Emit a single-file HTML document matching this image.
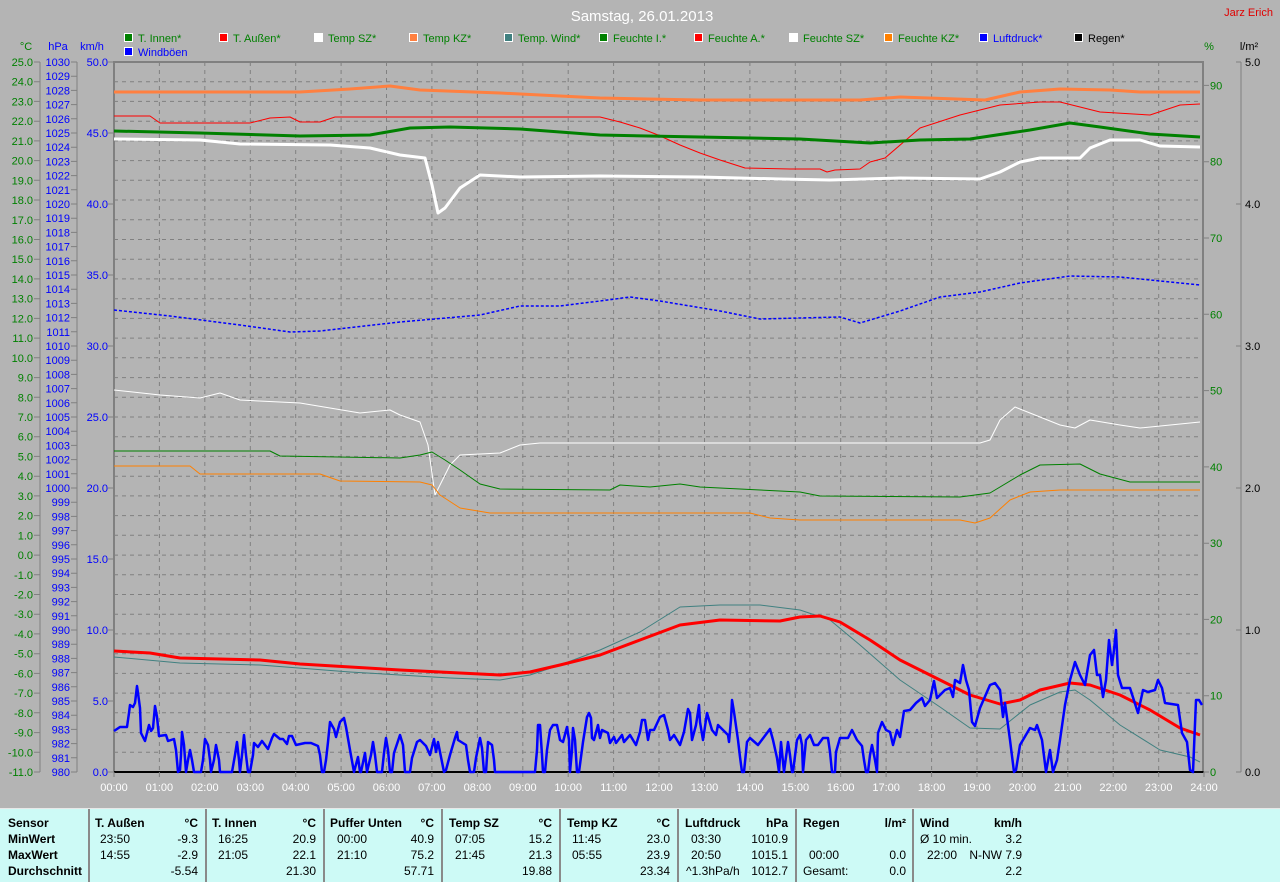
<!DOCTYPE html>
<html><head><meta charset="utf-8"><style>
html,body{margin:0;padding:0;width:1280px;height:881px;overflow:hidden;background:#b4b4b4;font-family:"Liberation Sans",sans-serif}
svg{position:absolute;left:0;top:0}
#tbl{position:absolute;left:0;top:808px;width:1280px;height:73px;background:#cdfaf6;border-top:1px solid #e8e8e8;font-size:12px;color:#000}
#tbl div{position:absolute;white-space:nowrap;line-height:14px}
.b{font-weight:bold}
.r{text-align:right}
.sep{width:2px;height:73px;top:0;background:#8a8a8a}
</style></head><body>
<svg width="1280" height="808" xmlns="http://www.w3.org/2000/svg" font-family="Liberation Sans, sans-serif" font-size="11">
<text x="642" y="21" fill="#fff" font-size="15" text-anchor="middle">Samstag, 26.01.2013</text>
<text x="1273" y="16" fill="#e00000" font-size="11" text-anchor="end">Jarz Erich</text>
<g font-size="11">
<rect x="124.5" y="33.5" width="8" height="8" fill="#008000" stroke="#fff"/><text x="138" y="42" fill="#008000">T. Innen*</text>
<rect x="219.5" y="33.5" width="8" height="8" fill="#f00" stroke="#fff"/><text x="233" y="42" fill="#008000">T. Außen*</text>
<rect x="314.5" y="33.5" width="8" height="8" fill="#fff" stroke="#fff"/><text x="328" y="42" fill="#008000">Temp SZ*</text>
<rect x="409.5" y="33.5" width="8" height="8" fill="#ff8040" stroke="#fff"/><text x="423" y="42" fill="#008000">Temp KZ*</text>
<rect x="504.5" y="33.5" width="8" height="8" fill="#408080" stroke="#fff"/><text x="518" y="42" fill="#008000">Temp. Wind*</text>
<rect x="599.5" y="33.5" width="8" height="8" fill="#008000" stroke="#fff"/><text x="613" y="42" fill="#008000">Feuchte I.*</text>
<rect x="694.5" y="33.5" width="8" height="8" fill="#f00" stroke="#fff"/><text x="708" y="42" fill="#008000">Feuchte A.*</text>
<rect x="789.5" y="33.5" width="8" height="8" fill="#fff" stroke="#fff"/><text x="803" y="42" fill="#008000">Feuchte SZ*</text>
<rect x="884.5" y="33.5" width="8" height="8" fill="#ff8000" stroke="#fff"/><text x="898" y="42" fill="#008000">Feuchte KZ*</text>
<rect x="979.5" y="33.5" width="8" height="8" fill="#00f" stroke="#fff"/><text x="993" y="42" fill="#0000ff">Luftdruck*</text>
<rect x="1074.5" y="33.5" width="8" height="8" fill="#000" stroke="#fff"/><text x="1088" y="42" fill="#000">Regen*</text>
<rect x="124.5" y="47.5" width="8" height="8" fill="#00f" stroke="#fff"/><text x="138" y="56" fill="#0000ff">Windböen</text>
</g>
<text x="26" y="50" fill="#008000" text-anchor="middle">°C</text>
<text x="58" y="50" fill="#0000ff" text-anchor="middle">hPa</text>
<text x="92" y="50" fill="#0000ff" text-anchor="middle">km/h</text>
<text x="1209" y="50" fill="#008000" text-anchor="middle">%</text>
<text x="1249" y="50" fill="#000" text-anchor="middle">l/m²</text>
<!-- grid -->
<g stroke="#808080" stroke-dasharray="4,4" stroke-width="1">
<path d="M114 81.7H1203M114 101.4H1203M114 121.2H1203M114 140.9H1203M114 160.6H1203M114 180.3H1203M114 200H1203M114 219.8H1203M114 239.5H1203M114 259.2H1203M114 278.9H1203M114 298.7H1203M114 318.4H1203M114 338.1H1203M114 357.8H1203M114 377.6H1203M114 397.3H1203M114 417H1203M114 436.7H1203M114 456.4H1203M114 476.2H1203M114 495.9H1203M114 515.6H1203M114 535.3H1203M114 555.1H1203M114 574.8H1203M114 594.5H1203M114 614.2H1203M114 633.9H1203M114 653.7H1203M114 673.4H1203M114 693.1H1203M114 712.8H1203M114 732.6H1203M114 752.3H1203"/>
<path d="M159.4 62V772M204.8 62V772M250.3 62V772M295.7 62V772M341.1 62V772M386.5 62V772M431.9 62V772M477.4 62V772M522.8 62V772M568.2 62V772M613.6 62V772M659 62V772M704.5 62V772M749.9 62V772M795.3 62V772M840.7 62V772M886.1 62V772M931.6 62V772M977 62V772M1022.4 62V772M1067.8 62V772M1113.2 62V772M1158.7 62V772"/>
</g>
<g stroke="#808080" stroke-width="2" fill="none"><path d="M114 772V62H1203V772"/></g>
<line x1="114" y1="772" x2="1204" y2="772" stroke="#000" stroke-width="2"/>
<!-- axes -->
<g stroke="#808080" stroke-width="1" fill="none">
<path d="M40 62V772M77 62V772M1241 62V772"/>
<path d="M34 62H40M34 81.7H40M34 101.4H40M34 121.2H40M34 140.9H40M34 160.6H40M34 180.3H40M34 200H40M34 219.8H40M34 239.5H40M34 259.2H40M34 278.9H40M34 298.7H40M34 318.4H40M34 338.1H40M34 357.8H40M34 377.6H40M34 397.3H40M34 417H40M34 436.7H40M34 456.4H40M34 476.2H40M34 495.9H40M34 515.6H40M34 535.3H40M34 555.1H40M34 574.8H40M34 594.5H40M34 614.2H40M34 633.9H40M34 653.7H40M34 673.4H40M34 693.1H40M34 712.8H40M34 732.6H40M34 752.3H40M34 772H40"/>
<path d="M71 62H77M71 76.2H77M71 90.4H77M71 104.6H77M71 118.8H77M71 133H77M71 147.2H77M71 161.4H77M71 175.6H77M71 189.8H77M71 204H77M71 218.2H77M71 232.4H77M71 246.6H77M71 260.8H77M71 275H77M71 289.2H77M71 303.4H77M71 317.6H77M71 331.8H77M71 346H77M71 360.2H77M71 374.4H77M71 388.6H77M71 402.8H77M71 417H77M71 431.2H77M71 445.4H77M71 459.6H77M71 473.8H77M71 488H77M71 502.2H77M71 516.4H77M71 530.6H77M71 544.8H77M71 559H77M71 573.2H77M71 587.4H77M71 601.6H77M71 615.8H77M71 630H77M71 644.2H77M71 658.4H77M71 672.6H77M71 686.8H77M71 701H77M71 715.2H77M71 729.4H77M71 743.6H77M71 757.8H77M71 772H77"/>
<path d="M108 62H114M108 133H114M108 204H114M108 275H114M108 346H114M108 417H114M108 488H114M108 559H114M108 630H114M108 701H114M108 772H114"/>
<path d="M1203 85.4H1209M1203 161.7H1209M1203 238H1209M1203 314.3H1209M1203 390.6H1209M1203 466.9H1209M1203 543.2H1209M1203 619.4H1209M1203 695.7H1209M1203 772H1209"/>
<path d="M1236 62H1241M1236 204H1241M1236 346H1241M1236 488H1241M1236 630H1241M1236 772H1241"/>
<path d="M114 772V777M159.4 772V777M204.8 772V777M250.3 772V777M295.7 772V777M341.1 772V777M386.5 772V777M431.9 772V777M477.4 772V777M522.8 772V777M568.2 772V777M613.6 772V777M659 772V777M704.5 772V777M749.9 772V777M795.3 772V777M840.7 772V777M886.1 772V777M931.6 772V777M977 772V777M1022.4 772V777M1067.8 772V777M1113.2 772V777M1158.7 772V777M1204 772V777"/>
</g>
<g fill="#008000" text-anchor="end" font-size="11">
<text x="33" y="66">25.0</text><text x="33" y="85.7">24.0</text><text x="33" y="105.4">23.0</text><text x="33" y="125.2">22.0</text><text x="33" y="144.9">21.0</text><text x="33" y="164.6">20.0</text><text x="33" y="184.3">19.0</text><text x="33" y="204">18.0</text><text x="33" y="223.8">17.0</text><text x="33" y="243.5">16.0</text><text x="33" y="263.2">15.0</text><text x="33" y="282.9">14.0</text><text x="33" y="302.7">13.0</text><text x="33" y="322.4">12.0</text><text x="33" y="342.1">11.0</text><text x="33" y="361.8">10.0</text><text x="33" y="381.6">9.0</text><text x="33" y="401.3">8.0</text><text x="33" y="421">7.0</text><text x="33" y="440.7">6.0</text><text x="33" y="460.4">5.0</text><text x="33" y="480.2">4.0</text><text x="33" y="499.9">3.0</text><text x="33" y="519.6">2.0</text><text x="33" y="539.3">1.0</text><text x="33" y="559.1">0.0</text><text x="33" y="578.8">-1.0</text><text x="33" y="598.5">-2.0</text><text x="33" y="618.2">-3.0</text><text x="33" y="637.9">-4.0</text><text x="33" y="657.7">-5.0</text><text x="33" y="677.4">-6.0</text><text x="33" y="697.1">-7.0</text><text x="33" y="716.8">-8.0</text><text x="33" y="736.6">-9.0</text><text x="33" y="756.3">-10.0</text><text x="33" y="776">-11.0</text>
</g>
<g fill="#0000ff" text-anchor="end" font-size="11">
<text x="70" y="66">1030</text><text x="70" y="80.2">1029</text><text x="70" y="94.4">1028</text><text x="70" y="108.6">1027</text><text x="70" y="122.8">1026</text><text x="70" y="137">1025</text><text x="70" y="151.2">1024</text><text x="70" y="165.4">1023</text><text x="70" y="179.6">1022</text><text x="70" y="193.8">1021</text><text x="70" y="208">1020</text><text x="70" y="222.2">1019</text><text x="70" y="236.4">1018</text><text x="70" y="250.6">1017</text><text x="70" y="264.8">1016</text><text x="70" y="279">1015</text><text x="70" y="293.2">1014</text><text x="70" y="307.4">1013</text><text x="70" y="321.6">1012</text><text x="70" y="335.8">1011</text><text x="70" y="350">1010</text><text x="70" y="364.2">1009</text><text x="70" y="378.4">1008</text><text x="70" y="392.6">1007</text><text x="70" y="406.8">1006</text><text x="70" y="421">1005</text><text x="70" y="435.2">1004</text><text x="70" y="449.4">1003</text><text x="70" y="463.6">1002</text><text x="70" y="477.8">1001</text><text x="70" y="492">1000</text><text x="70" y="506.2">999</text><text x="70" y="520.4">998</text><text x="70" y="534.6">997</text><text x="70" y="548.8">996</text><text x="70" y="563">995</text><text x="70" y="577.2">994</text><text x="70" y="591.4">993</text><text x="70" y="605.6">992</text><text x="70" y="619.8">991</text><text x="70" y="634">990</text><text x="70" y="648.2">989</text><text x="70" y="662.4">988</text><text x="70" y="676.6">987</text><text x="70" y="690.8">986</text><text x="70" y="705">985</text><text x="70" y="719.2">984</text><text x="70" y="733.4">983</text><text x="70" y="747.6">982</text><text x="70" y="761.8">981</text><text x="70" y="776">980</text>
<text x="108" y="66">50.0</text><text x="108" y="137">45.0</text><text x="108" y="208">40.0</text><text x="108" y="279">35.0</text><text x="108" y="350">30.0</text><text x="108" y="421">25.0</text><text x="108" y="492">20.0</text><text x="108" y="563">15.0</text><text x="108" y="634">10.0</text><text x="108" y="705">5.0</text><text x="108" y="776">0.0</text>
</g>
<g fill="#008000" font-size="11">
<text x="1210" y="89.4">90</text><text x="1210" y="165.7">80</text><text x="1210" y="242">70</text><text x="1210" y="318.3">60</text><text x="1210" y="394.6">50</text><text x="1210" y="470.9">40</text><text x="1210" y="547.2">30</text><text x="1210" y="623.4">20</text><text x="1210" y="699.7">10</text><text x="1210" y="776">0</text>
</g>
<g fill="#000" font-size="11">
<text x="1245" y="66">5.0</text><text x="1245" y="208">4.0</text><text x="1245" y="350">3.0</text><text x="1245" y="492">2.0</text><text x="1245" y="634">1.0</text><text x="1245" y="776">0.0</text>
</g>
<g fill="#fff" text-anchor="middle" font-size="11">
<text x="114" y="791">00:00</text><text x="159.4" y="791">01:00</text><text x="204.8" y="791">02:00</text><text x="250.3" y="791">03:00</text><text x="295.7" y="791">04:00</text><text x="341.1" y="791">05:00</text><text x="386.5" y="791">06:00</text><text x="431.9" y="791">07:00</text><text x="477.4" y="791">08:00</text><text x="522.8" y="791">09:00</text><text x="568.2" y="791">10:00</text><text x="613.6" y="791">11:00</text><text x="659" y="791">12:00</text><text x="704.5" y="791">13:00</text><text x="749.9" y="791">14:00</text><text x="795.3" y="791">15:00</text><text x="840.7" y="791">16:00</text><text x="886.1" y="791">17:00</text><text x="931.6" y="791">18:00</text><text x="977" y="791">19:00</text><text x="1022.4" y="791">20:00</text><text x="1067.8" y="791">21:00</text><text x="1113.2" y="791">22:00</text><text x="1158.7" y="791">23:00</text><text x="1204" y="791">24:00</text>
</g>
<!-- series -->
<g fill="none" stroke-linejoin="round">
<polyline stroke="#ff8040" stroke-width="3" points="114,92 300,92 350,89 390,86 420,90 500,93 600,98 700,100 800,100 860,100 900,97 985,100 1020,92 1060,89 1110,90 1140,92 1200,92"/>
<polyline stroke="#ff0000" stroke-width="1" points="114,116 150,116 160,123 250,123 270,118 290,117 300,122 320,122 335,117 600,117 620,122 640,128 658,135 680,145 700,153 720,160 745,168 790,169 820,169 827,172 835,170 860,169 870,162 885,158 920,128 960,115 1000,105 1040,102 1060,102 1100,112 1150,115 1180,105 1200,104"/>
<polyline stroke="#008000" stroke-width="3" points="114,131 200,133 300,136 370,135 410,128 450,127 520,129 600,135 700,137 800,139 870,143 920,140 970,139 1030,130 1070,123 1100,127 1150,134 1200,137"/>
<polyline stroke="#ffffff" stroke-width="3" points="114,139 200,140 240,144 330,145 370,148 400,155 425,158 432,185 438,213 445,208 460,188 480,175 520,177 600,176 700,177 780,179 830,180 900,178 980,179 1000,172 1020,162 1040,158 1080,158 1090,148 1110,140 1140,140 1160,146 1200,147"/>
<polyline stroke="#0000ff" stroke-width="1.5" stroke-dasharray="3,2" points="114,310 170,316 240,325 290,332 320,331 400,322 480,315 520,306 560,306 600,301 630,297 660,301 720,311 760,319 800,318 840,317 860,323 900,311 940,297 980,292 1020,283 1070,276 1120,277 1160,281 1200,285"/>
<polyline stroke="#ffffff" stroke-width="1" points="114,390 160,395 200,398 220,393 240,400 300,403 330,408 360,413 390,410 400,415 420,422 428,445 435,495 450,465 460,455 500,453 520,445 540,443 700,443 980,443 990,440 1000,420 1015,407 1030,413 1060,425 1075,428 1090,420 1120,425 1140,428 1200,422"/>
<polyline stroke="#008000" stroke-width="1" points="114,451 270,451 280,456 400,458 420,455 432,452 445,460 460,470 480,484 500,489 610,490 620,485 650,487 680,484 700,487 760,490 800,492 820,496 960,497 990,493 1020,475 1040,465 1080,464 1100,474 1130,482 1200,482"/>
<polyline stroke="#ff8000" stroke-width="1" points="114,466 190,466 200,474 320,474 340,481 420,482 432,485 440,495 460,508 490,513 750,513 770,518 800,520 960,520 975,523 990,518 1010,500 1030,492 1060,490 1200,490"/>
<polyline stroke="#408080" stroke-width="1" points="114,657 180,663 260,665 350,672 450,678 500,680 530,675 560,665 600,650 640,632 680,607 720,605 760,605 800,610 830,620 860,645 900,680 940,707 970,728 1000,729 1030,705 1060,692 1075,690 1090,700 1120,725 1160,750 1190,757 1200,762"/>
<polyline stroke="#ff0000" stroke-width="3" points="114,651 150,653 180,658 260,660 300,664 400,670 460,673 500,675 530,672 560,665 600,655 640,640 680,625 720,620 780,621 800,617 820,616 840,622 870,640 900,660 940,680 970,695 1000,704 1020,700 1040,690 1070,683 1090,685 1120,695 1150,710 1180,728 1200,735"/>
<polyline stroke="#0000ff" stroke-width="2.5" points="114,731 120,727 127,727 129,713 130,705 133,707 135,703 137,686 138,693 140,708 141,733 145,741 149,725 151,731 153,728 155,706 157,717 159,736 166,735 168,741 174,739 176,750 178,772 180,770 181,755 182,732 184,745 186,772 188,760 190,750 192,760 194,772 201,772 203,760 205,739 208,745 210,760 211,772 214,760 216,745 219,760 220,772 232,772 235,755 237,742 239,760 240,772 242,755 244,735 246,755 248,772 250,772 253,755 254,743 258,747 262,741 268,749 272,738 274,734 280,739 283,739 287,744 289,736 292,736 296,745 305,743 311,743 318,746 320,755 322,772 324,772 326,760 328,742 330,722 334,729 336,737 340,722 344,718 346,727 350,750 354,772 358,757 360,772 361,772 365,753 367,772 371,755 373,742 375,755 377,772 382,772 384,753 386,738 388,750 390,772 392,772 394,753 400,735 403,745 405,772 410,772 412,758 417,742 420,740 426,746 430,755 434,739 436,752 438,742 442,762 444,772 446,770 450,755 455,738 457,732 458,740 466,745 468,760 470,772 474,772 476,758 480,738 482,748 484,772 486,772 488,742 492,745 494,760 495,772 535,772 537,750 538,725 540,725 542,755 543,772 545,772 547,750 550,730 553,725 557,725 560,740 563,742 567,727 569,740 570,772 572,750 573,728 575,740 577,772 579,772 583,742 587,717 589,713 591,718 592,738 594,740 598,725 600,738 602,730 608,733 610,743 614,737 616,743 622,735 624,742 630,735 636,745 640,732 642,720 645,720 648,740 650,730 654,730 660,717 664,715 668,730 670,740 674,735 680,745 684,732 688,709 690,713 692,740 696,725 699,705 700,722 703,740 707,713 712,730 716,735 718,725 728,735 729,742 731,720 732,700 734,712 738,740 740,757 742,772 744,772 747,742 750,738 758,745 767,733 770,729 773,740 777,758 779,772 781,742 784,772 788,742 790,755 792,772 793,772 797,740 800,735 802,745 803,772 806,740 810,735 814,745 818,745 823,738 828,738 830,752 832,772 835,772 836,752 840,738 848,738 852,730 857,740 862,746 864,760 866,772 868,772 870,755 872,745 875,760 877,772 878,733 882,722 886,730 890,732 893,745 897,730 900,737 904,711 910,710 916,703 922,698 925,706 930,700 934,681 937,698 945,690 950,688 953,697 955,680 960,683 963,665 966,680 969,690 972,722 975,726 980,708 990,685 995,683 1000,690 1003,717 1005,703 1010,740 1014,772 1016,770 1020,745 1030,728 1035,730 1037,725 1042,740 1046,772 1050,750 1053,772 1057,760 1060,740 1065,705 1070,680 1075,662 1080,675 1085,685 1090,655 1094,650 1097,675 1100,675 1103,697 1106,680 1109,640 1112,665 1114,650 1116,630 1118,675 1122,688 1130,688 1138,713 1143,690 1148,692 1155,690 1158,680 1162,688 1165,703 1178,705 1182,733 1187,742 1190,770 1193,772 1196,700 1199,700 1202,705"/>
</g>
</svg>
<div id="tbl">
<div class="sep" style="left:88px"></div><div class="sep" style="left:205px"></div><div class="sep" style="left:323px"></div><div class="sep" style="left:441px"></div><div class="sep" style="left:559px"></div><div class="sep" style="left:677px"></div><div class="sep" style="left:795px"></div><div class="sep" style="left:912px"></div>
<div class="b" style="left:8px;top:7px">Sensor</div><div class="b" style="left:8px;top:23px">MinWert</div><div class="b" style="left:8px;top:39px">MaxWert</div><div class="b" style="left:8px;top:55px">Durchschnitt</div>
<div class="b" style="left:95px;top:7px">T. Außen</div><div class="b r" style="left:150px;width:48px;top:7px">°C</div>
<div style="left:100px;top:23px">23:50</div><div class="r" style="left:150px;width:48px;top:23px">-9.3</div>
<div style="left:100px;top:39px">14:55</div><div class="r" style="left:150px;width:48px;top:39px">-2.9</div>
<div class="r" style="left:150px;width:48px;top:55px">-5.54</div>
<div class="b" style="left:212px;top:7px">T. Innen</div><div class="b r" style="left:268px;width:48px;top:7px">°C</div>
<div style="left:218px;top:23px">16:25</div><div class="r" style="left:268px;width:48px;top:23px">20.9</div>
<div style="left:218px;top:39px">21:05</div><div class="r" style="left:268px;width:48px;top:39px">22.1</div>
<div class="r" style="left:268px;width:48px;top:55px">21.30</div>
<div class="b" style="left:330px;top:7px">Puffer Unten</div><div class="b r" style="left:386px;width:48px;top:7px">°C</div>
<div style="left:337px;top:23px">00:00</div><div class="r" style="left:386px;width:48px;top:23px">40.9</div>
<div style="left:337px;top:39px">21:10</div><div class="r" style="left:386px;width:48px;top:39px">75.2</div>
<div class="r" style="left:386px;width:48px;top:55px">57.71</div>
<div class="b" style="left:449px;top:7px">Temp SZ</div><div class="b r" style="left:504px;width:48px;top:7px">°C</div>
<div style="left:455px;top:23px">07:05</div><div class="r" style="left:504px;width:48px;top:23px">15.2</div>
<div style="left:455px;top:39px">21:45</div><div class="r" style="left:504px;width:48px;top:39px">21.3</div>
<div class="r" style="left:504px;width:48px;top:55px">19.88</div>
<div class="b" style="left:567px;top:7px">Temp KZ</div><div class="b r" style="left:622px;width:48px;top:7px">°C</div>
<div style="left:572px;top:23px">11:45</div><div class="r" style="left:622px;width:48px;top:23px">23.0</div>
<div style="left:572px;top:39px">05:55</div><div class="r" style="left:622px;width:48px;top:39px">23.9</div>
<div class="r" style="left:622px;width:48px;top:55px">23.34</div>
<div class="b" style="left:685px;top:7px">Luftdruck</div><div class="b r" style="left:740px;width:48px;top:7px">hPa</div>
<div style="left:691px;top:23px">03:30</div><div class="r" style="left:740px;width:48px;top:23px">1010.9</div>
<div style="left:691px;top:39px">20:50</div><div class="r" style="left:740px;width:48px;top:39px">1015.1</div>
<div style="left:686px;top:55px">^1.3hPa/h</div><div class="r" style="left:740px;width:48px;top:55px">1012.7</div>
<div class="b" style="left:803px;top:7px">Regen</div><div class="b r" style="left:858px;width:48px;top:7px">l/m²</div>
<div style="left:809px;top:39px">00:00</div><div class="r" style="left:858px;width:48px;top:39px">0.0</div>
<div style="left:803px;top:55px">Gesamt:</div><div class="r" style="left:858px;width:48px;top:55px">0.0</div>
<div class="b" style="left:920px;top:7px">Wind</div><div class="b r" style="left:962px;width:60px;top:7px">km/h</div>
<div style="left:920px;top:23px">Ø 10 min.</div><div class="r" style="left:962px;width:60px;top:23px">3.2</div>
<div style="left:927px;top:39px">22:00</div><div class="r" style="left:962px;width:60px;top:39px">N-NW 7.9</div>
<div class="r" style="left:962px;width:60px;top:55px">2.2</div>
</div>
</body></html>
